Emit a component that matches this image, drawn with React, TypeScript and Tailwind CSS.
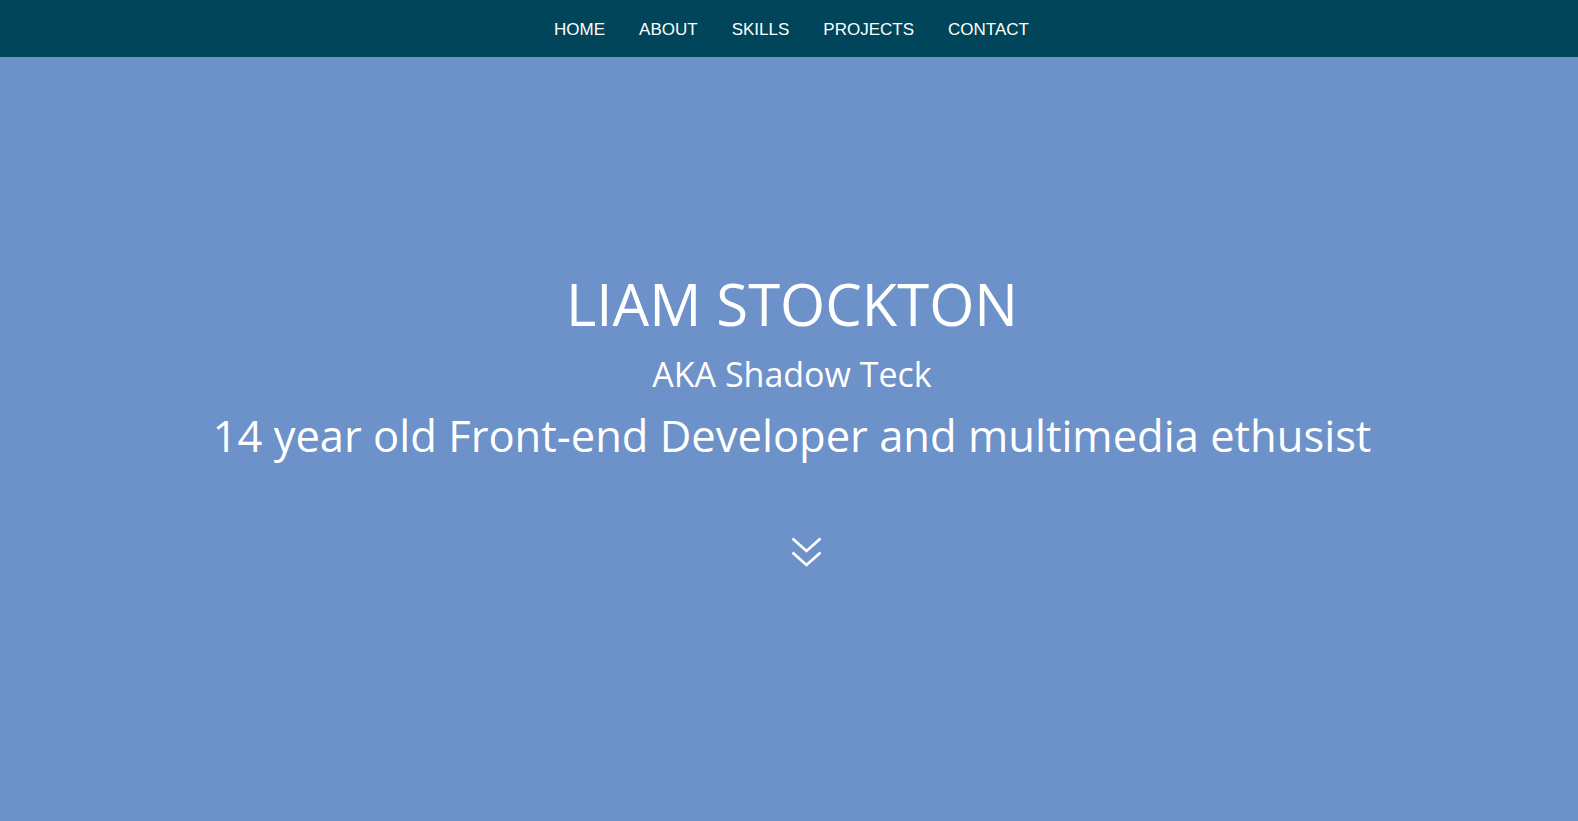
import React from 'react'

const links = ['HOME', 'ABOUT', 'SKILLS', 'PROJECTS', 'CONTACT']

const App: React.FC = () => {
  return (
    <div className="min-h-screen flex flex-col bg-[#6d91c9]">
      {/* ナビゲーション */}
      <nav className="h-[57px] pt-[2px] bg-[#004559] flex items-center justify-center">
        <ul className="flex items-center gap-[34px] pl-[5px] font-['Liberation_Sans',Arial,sans-serif] text-[17px] text-white">
          {links.map((l) => (
            <li key={l}>
              <a href="#" className="block">
                {l}
              </a>
            </li>
          ))}
        </ul>
      </nav>

      {/* ヒーロー */}
      <main className="flex-1 flex flex-col items-center pt-[212px] pl-[6px] text-white font-['Open_Sans','Noto_Sans',sans-serif]">
        <h1 className="text-[58px] leading-[70px]">LIAM STOCKTON</h1>
        <h2 className="text-[34px] leading-[40px] mt-[15px]">AKA Shadow Teck</h2>
        <p className="text-[43.5px] leading-[52px] mt-[16px]">
          14 year old Front-end Developer and multimedia ethusist
        </p>
        <a href="#" className="mt-[75px] ml-[28px] block">
          <svg
            width="31"
            height="30"
            viewBox="0 0 31 30"
            fill="none"
            stroke="white"
            strokeWidth="2.7"
          >
            <polyline points="1.5,1.5 15.5,14 29.5,1.5" />
            <polyline points="1.5,15.5 15.5,28 29.5,15.5" />
          </svg>
        </a>
      </main>
    </div>
  )
}

export default App
